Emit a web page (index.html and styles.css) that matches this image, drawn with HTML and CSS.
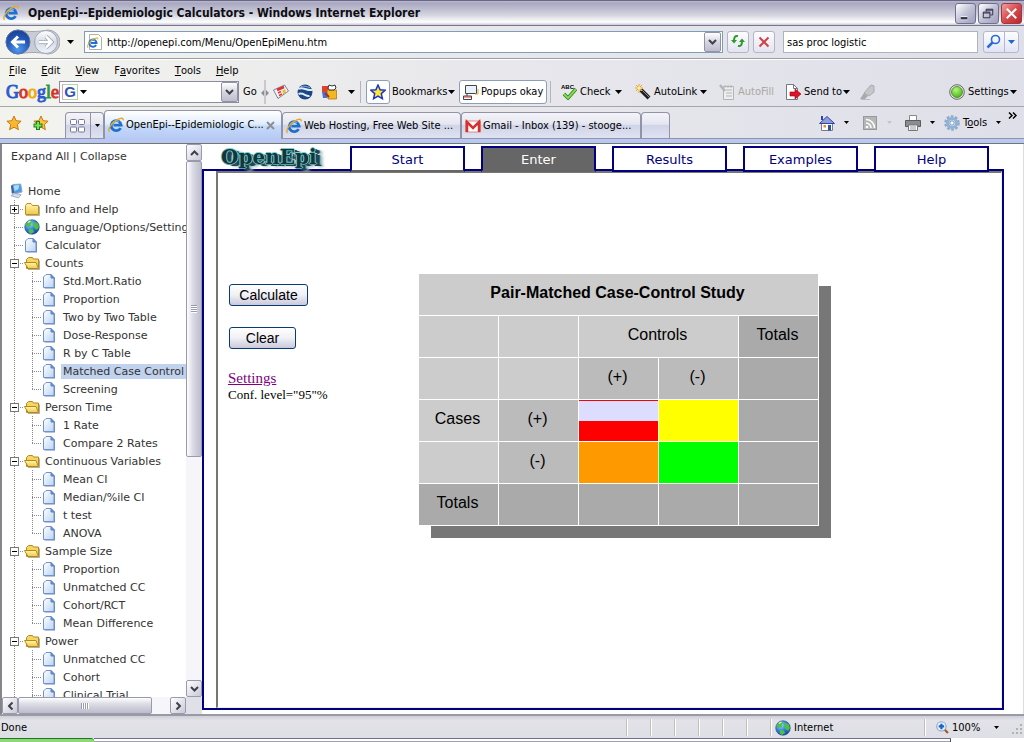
FILE: index.html
```html
<!DOCTYPE html>
<html lang="en">
<head>
<meta charset="utf-8">
<title>OpenEpi--Epidemiologic Calculators</title>
<link rel="stylesheet" href="styles.css">
</head>
<body>
<svg class="defs" aria-hidden="true">
  <defs>
    <linearGradient id="gPage" x1="0" y1="0" x2="1" y2="1"><stop offset="0" stop-color="#fff"/><stop offset="1" stop-color="#b9d4f6"/></linearGradient>
    <linearGradient id="gFolder" x1="0" y1="0" x2="0" y2="1"><stop offset="0" stop-color="#fff6b8"/><stop offset="1" stop-color="#f0c840"/></linearGradient>
    <radialGradient id="gBack" cx=".5" cy=".8" r=".8"><stop offset="0" stop-color="#4f9af0"/><stop offset=".6" stop-color="#2358b8"/><stop offset="1" stop-color="#1a3f90"/></radialGradient>
    <linearGradient id="gFwd" x1="0" y1="0" x2="0" y2="1"><stop offset="0" stop-color="#fff"/><stop offset=".5" stop-color="#d5dbe6"/><stop offset="1" stop-color="#f0f4fb"/></linearGradient>
    <radialGradient id="gGlobe" cx=".35" cy=".3" r=".8"><stop offset="0" stop-color="#9fdcff"/><stop offset=".5" stop-color="#2f7fd6"/><stop offset="1" stop-color="#123f94"/></radialGradient>
    <radialGradient id="gGreen" cx=".4" cy=".3" r=".8"><stop offset="0" stop-color="#b6f57c"/><stop offset="1" stop-color="#3fae10"/></radialGradient>
  </defs>
  <symbol id="ie" viewBox="0 0 16 16">
    <path d="M12.6 11.1A5 5 0 1 1 13.2 8.2H5.4" fill="none" stroke="#1f6fd0" stroke-width="2.8"/>
    <path d="M4.6 6.5A4.4 4.4 0 0 1 11 4.6" fill="none" stroke="#6cc0f8" stroke-width="1.2"/>
    <path d="M1.6 14.8C-.6 13 2.6 7 8 3.4 12 .8 15.6.2 15.2 3.4" fill="none" stroke="#e9a820" stroke-width="1.4"/>
  </symbol>
  <symbol id="page" viewBox="0 0 14 15">
    <path d="M2.500 4H13v10.500H2.500z" fill="#7785b0"/>
    <path d="M4 .5h5l3 3.500v9.500H1.500V3z" fill="url(#gPage)" stroke="#6f93d0"/>
    <path d="M9 .5V4h3.500z" fill="#6f97dc" stroke="#5c7fc0"/>
  </symbol>
  <symbol id="folder" viewBox="0 0 16 14">
    <path d="M1.500 3.500 3 1.500h4l1.500 2h6v9h-13z" fill="url(#gFolder)" stroke="#c09018"/>
    <path d="M2 13.500h13.500v-9" fill="none" stroke="#8c8c8c" stroke-width=".7"/>
  </symbol>
  <symbol id="open" viewBox="0 0 16 14">
    <path d="M2.500 12.500v-9L4.500 1.500h4l1 1.500h5v9.500z" fill="#f3d568" stroke="#b88a14"/>
    <path d="M.5 6.500H12l2.500 6H4z" fill="url(#gFolder)" stroke="#b88a14"/>
    <path d="M4 13.500h11.500v-9" fill="none" stroke="#8c8c8c" stroke-width=".7"/>
  </symbol>
  <symbol id="globe" viewBox="0 0 16 16">
    <circle cx="8" cy="8" r="7.300" fill="url(#gGlobe)" stroke="#27508c" stroke-width=".6"/>
    <path d="M3 3.500C5 1.500 8 1 8.500 2.500L6.500 5 7 7 4 8 1.500 6.500zM10 3l3.500 1 1.500 4-2 3-2.500-2L9 6.500zM5 10l4 .5 1 2.500-3 2-2.500-2z" fill="#4fbf45"/>
    <path d="M4 3.500 6.500 2" stroke="#dfffcf" stroke-width="1.200"/>
  </symbol>
  <symbol id="pc" viewBox="0 0 14 16">
    <path d="M3 1 11.500.5 13 9 5 11z" fill="#4a9ce8" stroke="#8ba3c2"/>
    <path d="M4 2l6-.4L9 6 5 8z" fill="#a7dcff"/>
    <path d="m1 13 4-2.500 7 1.500-3 3.500z" fill="#d6dceb" stroke="#8791aa" stroke-width=".7"/>
    <path d="M1 2 3 1.500 4.800 10 2 11z" fill="#3a63a8"/>
  </symbol>
  <symbol id="star" viewBox="0 0 16 16"><path d="m8 1 2.100 4.700 5 .5-3.800 3.400 1.100 5.100L8 12.200l-4.400 2.500 1.100-5.100L.9 6.200l5-.5z"/></symbol>
  <symbol id="down" viewBox="0 0 7 4"><path d="M0 0h7L3.500 4z"/></symbol>
  <symbol id="chev" viewBox="0 0 9 6"><path d="m1 1 3.500 3.500L8 1" fill="none" stroke="#404048" stroke-width="2"/></symbol>
</svg>

<header class="titlebar">
  <svg class="i16"><use href="#ie"/></svg>
  <h1>OpenEpi--Epidemiologic Calculators - Windows Internet Explorer</h1>
  <button class="win" aria-label="Minimize"><svg viewBox="0 0 20 20"><path d="M5 15h7" stroke="#fff" stroke-width="4"/><path d="M5 15h7" stroke="#33334d" stroke-width="2.500"/></svg></button>
  <button class="win" aria-label="Restore"><svg viewBox="0 0 20 20" fill="none" stroke="#2c2c44"><path d="M7.500 8V5.500h7v6H12"/><path d="M7.500 6.500h7"/><path d="M4.500 8.500h7v6h-7zM4.500 9.500h7"/></svg></button>
  <button class="win close" aria-label="Close"><svg viewBox="0 0 20 20"><path d="m5 5 10 10M15 5 5 15" stroke="#fff" stroke-width="2.200"/></svg></button>
</header>

<div class="address">
  <div class="nav">
    <svg class="backfwd" viewBox="0 0 56 28">
      <path d="M14 2C24 4 34 4 44 2a12 12 0 0 1 0 24C34 24 24 24 14 26a12 12 0 0 1 0-24z" fill="#c9ccd4" stroke="#a4a7b0"/>
      <circle cx="14" cy="14" r="12" fill="url(#gBack)" stroke="#5a74a8"/>
      <circle cx="42" cy="14" r="11.500" fill="url(#gFwd)" stroke="#9ea5b4"/>
      <path d="M21 14H9M14 8.500 8.500 14l5.500 5.500" fill="none" stroke="#fff" stroke-width="3"/>
      <path d="M35 14h12M42 8.500l5.500 5.500-5.500 5.500" fill="none" stroke="#98a0ae" stroke-width="4"/>
      <path d="M35 14h12M42 8.500l5.500 5.500-5.500 5.500" fill="none" stroke="#fff" stroke-width="2.500"/>
    </svg>
    <button class="arrow" aria-label="Recent pages"><svg><use href="#down"/></svg></button>
  </div>
  <div class="field url">
    <svg class="i16" viewBox="0 0 16 16"><path d="M2.500.500h9l3 3v12h-12z" fill="#fff" stroke="#b0b0a8"/><g transform="translate(0 3) scale(.72)"><use href="#ie" width="16" height="16"/></g></svg>
    <input aria-label="Address" value="http://openepi.com/Menu/OpenEpiMenu.htm">
    <button class="drop" aria-label="Show addresses"><svg><use href="#chev"/></svg></button>
  </div>
  <button class="sq" aria-label="Refresh"><svg viewBox="0 0 20 20" fill="none" stroke="#2f9a2a" stroke-width="2"><path d="M10 4C7 3.500 6 5 6 9"/><path d="M10 14c3 .5 4-1 4-5"/><path d="m3 8 3 3.500L9 8zM11 10l3-3.500L17 10z" fill="#2f9a2a" stroke="none"/></svg></button>
  <button class="sq" aria-label="Stop"><svg viewBox="0 0 20 20"><path d="m5.500 5.500 9 9M14.500 5.500l-9 9" stroke="#cf4348" stroke-width="2"/></svg></button>
  <div class="field find"><input aria-label="Search" value="sas proc logistic"></div>
  <div class="split">
    <button aria-label="Search the web"><svg class="i16" viewBox="0 0 16 16" fill="none" stroke="#2a6ad8"><circle cx="9.500" cy="5.500" r="4" stroke-width="1.600"/><path d="m6.500 8.500-5 5" stroke-width="2.500"/></svg></button>
    <button class="arrow blue" aria-label="Search options"><svg><use href="#down"/></svg></button>
  </div>
</div>

<nav class="menu" aria-label="Menu">
  <button><u>F</u>ile</button><button><u>E</u>dit</button><button><u>V</u>iew</button><button>F<u>a</u>vorites</button><button><u>T</u>ools</button><button><u>H</u>elp</button>
</nav>

<div class="gbar">
  <span class="google"><b class="cb">G</b><b class="cr">o</b><b class="cy">o</b><b class="cb">g</b><b class="cg">l</b><b class="cr">e</b></span>
  <div class="field gfind">
    <span class="gbox">G</span><svg class="dn"><use href="#down"/></svg>
    <input aria-label="Google search">
    <button class="drop" aria-label="Search history"><svg><use href="#chev"/></svg></button>
  </div>
  <button>Go</button>
  <svg class="grip" viewBox="0 0 8 24"><path d="M4 0v24" stroke="#a5a5b0"/><path d="m0 13 3-3v6zM8 13l-3-3v6z" fill="#8c8c94"/></svg>
  <button aria-label="News"><svg class="i16" viewBox="0 0 16 16"><path d="m.5 6 11-5 4 6L5 14.500z" fill="#f4f4f8" stroke="#7c8296"/><path d="m4 6 7-3" stroke="#e03030" stroke-width="2.500"/><path d="m5 9 3-1.500M6 11.500 9 10" stroke="#e03838" stroke-width="1.500"/><path d="m9.500 7.500 3-1.500M10 9.500 13 8" stroke="#e6b020" stroke-width="1.500"/></svg></button>
  <button aria-label="Earth"><svg class="i16" viewBox="0 0 16 16"><circle cx="8" cy="8" r="7.500" fill="#1d4683"/><path d="M1 5c5-3 8 2 14 1M1.500 10c5-2 7 3 11 2" fill="none" stroke="#dcecff" stroke-width="2"/><path d="M4 2.500c4-1 6 .5 9 1" fill="none" stroke="#7fb0e8"/></svg></button>
  <button aria-label="Games"><svg class="i16" viewBox="0 0 16 16"><path d="M1 2h6v6H1z" fill="#e0402c"/><path d="M6 6h9.500v9H7z" fill="#f2b81f" stroke="#a76f0c" stroke-width=".7"/><path d="M1 8h5v6H2z" fill="#3f75d6"/><path d="m8 1 3 1 3-1 1 3-2 2H8L7 4z" fill="#fff" stroke="#333"/><path d="m4 9 4 4" stroke="#b12a1a" stroke-width="2"/></svg></button>
  <button class="arrow" aria-label="More"><svg><use href="#down"/></svg></button>
  <span class="vbar"></span>
  <button class="boxed" aria-label="Bookmark page"><svg class="i16" fill="#ffe82a" stroke="#1c32d8" stroke-width="1.500"><use href="#star"/></svg></button>
  <button class="lab book">Bookmarks<svg class="dn"><use href="#down"/></svg></button>
  <button class="boxed"><svg class="i16" viewBox="0 0 16 16"><path d="M2.500 1.500h11v8h-11z" fill="#e8f3ff" stroke="#444"/><path d="M15 5v5h-3" fill="none" stroke="#d9a83a"/><path d="M4 10v2M.5 12h8v3.500h-8z" fill="#fff" stroke="#444"/><path d="M1 13h7" stroke="#d23030"/></svg>Popups okay</button>
  <span class="vbar near"></span>
  <button class="spread"><svg class="i16" viewBox="0 0 16 16"><text x="0" y="5" class="abc">ABC</text><path d="m3 10 4 4 8-9" fill="none" stroke="#38761d" stroke-width="3.500"/><path d="m3 10 4 4 8-9" fill="none" stroke="#7fdc50" stroke-width="2"/></svg>Check<svg class="dn end"><use href="#down"/></svg></button>
  <button class="spread"><svg class="i16" viewBox="0 0 16 16"><path d="m6 6 8 8" stroke="#222" stroke-width="4"/><path d="m7 6 7 7" stroke="#8a8a8a"/><path d="M4 0v9M0 4h8M1 1l6 6M7 1 1 7" stroke="#e8a81c"/><circle cx="4" cy="4" r="1.500" fill="#fff5a0"/></svg>AutoLink<svg class="dn end"><use href="#down"/></svg></button>
  <button class="off" disabled><svg class="i16" viewBox="0 0 16 16" fill="none" stroke="#b4b4b8"><path d="M4.500 2.500h10v13h-10z" fill="#eee"/><path d="M7 6h6M7 9h6M7 12h6M6 1v3M9 1v3M12 1v3"/><path d="m1 1 5 6" stroke-width="2.500"/></svg>AutoFill</button>
  <button class="lab"><svg class="i16" viewBox="0 0 16 16"><path d="M1.500.500h7l4 4v11h-11z" fill="#fff" stroke="#77778a"/><path d="M8.500.500v4h4" fill="none" stroke="#77778a"/><path d="M5 8h5V5l6 5-6 5v-3H5z" fill="#e0132c" stroke="#900" stroke-width=".6"/></svg><span>Send to</span><svg class="dn"><use href="#down"/></svg></button>
  <button aria-label="Highlight"><svg class="i16" viewBox="0 0 16 16"><path d="m5 9 7-8 3 1v6l-5 4z" fill="#c6c6ca" stroke="#a9a9ae"/><path d="m5 9 4 3-3 3H1z" fill="#a9a9ae"/><path d="M2 15.500h9" stroke="#bbb"/></svg></button>
  <button class="lab"><svg class="i16" viewBox="0 0 16 16"><circle cx="8" cy="8" r="7.300" fill="#e9e9e9" stroke="#666"/><circle cx="8" cy="8" r="5.500" fill="url(#gGreen)" stroke="#3c8a1c" stroke-width=".8"/></svg><span>Settings</span><svg class="dn"><use href="#down"/></svg></button>
</div>

<div class="tabrow">
  <button aria-label="Favorites Center"><svg class="i16" fill="#fcb731" stroke="#c77a10"><use href="#star"/></svg></button>
  <button aria-label="Add to Favorites"><svg class="i16" viewBox="0 0 16 16"><g fill="#fcc540" stroke="#c77a10"><use href="#star" width="16" height="16"/></g><path d="M5 6v9M.5 10.500h9" stroke="#1e7e1e" stroke-width="4"/><path d="M5 7v7M1.500 10.500h7" stroke="#7be05a" stroke-width="2"/></svg></button>
  <div class="quick">
    <button aria-label="Quick Tabs"><svg class="i16" viewBox="0 0 16 14" fill="#fff" stroke="#77779a"><rect x=".5" y=".5" width="6" height="5" rx="1"/><rect x="8.500" y=".5" width="6" height="5" rx="1"/><rect x=".5" y="8" width="6" height="5" rx="1"/><rect x="8.500" y="8" width="6" height="5" rx="1"/></svg></button>
    <button class="arrow small" aria-label="Tab list"><svg><use href="#down"/></svg></button>
  </div>
  <button class="tab on"><svg class="i16"><use href="#ie"/></svg><span>OpenEpi--Epidemiologic C...</span><svg class="x" viewBox="0 0 9 9"><path d="m1 1 7 7M8 1 1 8" stroke="#8e8e96" stroke-width="2"/></svg></button>
  <button class="tab"><svg class="i16"><use href="#ie"/></svg><span>Web Hosting, Free Web Site ...</span></button>
  <button class="tab"><svg class="i16" viewBox="0 0 16 16"><path d="M.5 3h15v11H.5z" fill="#fff" stroke="#d88"/><path d="M2 14V4l6 6 6-6v10" fill="none" stroke="#d8302f" stroke-width="2.500"/></svg><span>Gmail - Inbox (139) - stooge...</span></button>
  <button class="tab" aria-label="New Tab"></button>
  <span></span>
  <button class="cmd" aria-label="Home"><svg class="i16" viewBox="0 0 16 16"><path d="M2.500 8h11v7.500h-11z" fill="#fff" stroke="#7c7c90"/><path d="M.5 8.500 8 1.500l7.500 7z" fill="#8d9ddf" stroke="#3344a4"/><path d="M3 1v4" stroke="#3344a4" stroke-width="2"/><path d="M9 10h3v5.500H9z" fill="#2a50a8"/><path d="M4.500 10h2.500v2.500H4.500z" fill="#e08d3c"/></svg><svg class="dn"><use href="#down"/></svg></button>
  <button class="cmd off" aria-label="Feeds"><svg class="i16" viewBox="0 0 16 16"><rect x="1.500" y="1.500" width="13" height="13" fill="#b6b6b6" stroke="#999"/><path d="M4 8a5 5 0 0 1 5 5M4 4.500A8.500 8.500 0 0 1 12.500 13" fill="none" stroke="#fff" stroke-width="1.600"/><circle cx="5" cy="12" r="1.300" fill="#fff"/></svg><svg class="dn"><use href="#down"/></svg></button>
  <button class="cmd" aria-label="Print"><svg class="i16" viewBox="0 0 16 16"><path d="M4.500.500h7v6h-7z" fill="#fff" stroke="#888"/><path d="M.5 5.500h15v6H.5z" fill="#8b8b92" stroke="#5b5b62"/><path d="M3.500 10h9v5.500h-9z" fill="#fff" stroke="#777"/><path d="M5 12h6M5 14h6" stroke="#999"/></svg><svg class="dn"><use href="#down"/></svg></button>
  <button class="cmd"><svg class="i16" viewBox="0 0 16 16"><circle cx="8" cy="8" r="6.500" fill="none" stroke="#8ea9c6" stroke-width="2.500" stroke-dasharray="2.600 1.500"/><circle cx="8" cy="8" r="4.500" fill="#fff" stroke="#8fb2d6" stroke-width="3"/><circle cx="8" cy="8" r="2.200" fill="#fff" stroke="#6f8fb0"/></svg><span>T<u>o</u>ols</span><svg class="dn"><use href="#down"/></svg></button>
  <button class="more" aria-label="More commands"><svg viewBox="0 0 9 7" fill="none" stroke="#000" stroke-width="1.500"><path d="m1 .5 3 3-3 3M5 .5l3 3-3 3"/></svg></button>
</div>
<div class="strip"></div>

<div class="content">
  <aside class="side">
    <div class="tree">
      <p><a href="#">Expand All</a> | <a href="#">Collapse</a></p>
      <ul>
        <li><svg class="pc"><use href="#pc"/></svg><a href="#">Home</a></li>
        <li><i class="br"><button class="tg plus" aria-label="Expand"></button></i><svg class="fo"><use href="#folder"/></svg><a href="#">Info and Help</a></li>
        <li><i class="br"></i><svg class="gl"><use href="#globe"/></svg><a href="#">Language/Options/Settings</a></li>
        <li><i class="br"></i><svg class="pg"><use href="#page"/></svg><a href="#">Calculator</a></li>
        <li><i class="br"><button class="tg" aria-label="Collapse"></button></i><svg class="fo"><use href="#open"/></svg><a href="#">Counts</a></li>
        <li><i class="v"></i><i class="br"></i><svg class="pg"><use href="#page"/></svg><a href="#">Std.Mort.Ratio</a></li>
        <li><i class="v"></i><i class="br"></i><svg class="pg"><use href="#page"/></svg><a href="#">Proportion</a></li>
        <li><i class="v"></i><i class="br"></i><svg class="pg"><use href="#page"/></svg><a href="#">Two by Two Table</a></li>
        <li><i class="v"></i><i class="br"></i><svg class="pg"><use href="#page"/></svg><a href="#">Dose-Response</a></li>
        <li><i class="v"></i><i class="br"></i><svg class="pg"><use href="#page"/></svg><a href="#">R by C Table</a></li>
        <li><i class="v"></i><i class="br"></i><svg class="pg"><use href="#page"/></svg><a href="#" class="sel">Matched Case Control</a></li>
        <li><i class="v"></i><i class="br last"></i><svg class="pg"><use href="#page"/></svg><a href="#">Screening</a></li>
        <li><i class="br"><button class="tg" aria-label="Collapse"></button></i><svg class="fo"><use href="#open"/></svg><a href="#">Person Time</a></li>
        <li><i class="v"></i><i class="br"></i><svg class="pg"><use href="#page"/></svg><a href="#">1 Rate</a></li>
        <li><i class="v"></i><i class="br last"></i><svg class="pg"><use href="#page"/></svg><a href="#">Compare 2 Rates</a></li>
        <li><i class="br"><button class="tg" aria-label="Collapse"></button></i><svg class="fo"><use href="#open"/></svg><a href="#">Continuous Variables</a></li>
        <li><i class="v"></i><i class="br"></i><svg class="pg"><use href="#page"/></svg><a href="#">Mean CI</a></li>
        <li><i class="v"></i><i class="br"></i><svg class="pg"><use href="#page"/></svg><a href="#">Median/%ile CI</a></li>
        <li><i class="v"></i><i class="br"></i><svg class="pg"><use href="#page"/></svg><a href="#">t test</a></li>
        <li><i class="v"></i><i class="br last"></i><svg class="pg"><use href="#page"/></svg><a href="#">ANOVA</a></li>
        <li><i class="br"><button class="tg" aria-label="Collapse"></button></i><svg class="fo"><use href="#open"/></svg><a href="#">Sample Size</a></li>
        <li><i class="v"></i><i class="br"></i><svg class="pg"><use href="#page"/></svg><a href="#">Proportion</a></li>
        <li><i class="v"></i><i class="br"></i><svg class="pg"><use href="#page"/></svg><a href="#">Unmatched CC</a></li>
        <li><i class="v"></i><i class="br"></i><svg class="pg"><use href="#page"/></svg><a href="#">Cohort/RCT</a></li>
        <li><i class="v"></i><i class="br last"></i><svg class="pg"><use href="#page"/></svg><a href="#">Mean Difference</a></li>
        <li><i class="br"><button class="tg" aria-label="Collapse"></button></i><svg class="fo"><use href="#open"/></svg><a href="#">Power</a></li>
        <li><i class="v"></i><i class="br"></i><svg class="pg"><use href="#page"/></svg><a href="#">Unmatched CC</a></li>
        <li><i class="v"></i><i class="br"></i><svg class="pg"><use href="#page"/></svg><a href="#">Cohort</a></li>
        <li><i class="v"></i><i class="br"></i><svg class="pg"><use href="#page"/></svg><a href="#">Clinical Trial</a></li>
      </ul>
    </div>
    <div class="vscroll">
      <button class="sb up" aria-label="Scroll up"><svg><use href="#chev"/></svg></button>
      <div class="track"><div class="thumb"><span></span></div></div>
      <button class="sb" aria-label="Scroll down"><svg><use href="#chev"/></svg></button>
    </div>
    <div class="hscroll">
      <button class="sb left" aria-label="Scroll left"><svg><use href="#chev"/></svg></button>
      <div class="track"><div class="thumb"><span></span></div></div>
      <button class="sb right" aria-label="Scroll right"><svg><use href="#chev"/></svg></button>
    </div>
    <div class="corner"></div>
  </aside>

  <main class="main">
    <nav class="tabs" aria-label="Sections">
      <span class="logo">OpenEpi</span>
      <a href="#" class="visited">Start</a><a href="#" class="current">Enter</a><a href="#">Results</a><a href="#">Examples</a><a href="#">Help</a>
    </nav>
    <div class="frame">
      <div class="pane">
        <div class="actions">
          <button class="xp wide">Calculate</button>
          <button class="xp">Clear</button>
          <a href="#">Settings</a>
          <p>Conf. level="95"%</p>
        </div>
        <table>
          <tr><th colspan="5">Pair-Matched Case-Control Study</th></tr>
          <tr><td></td><td></td><td colspan="2">Controls</td><td class="t">Totals</td></tr>
          <tr><td></td><td></td><td class="m">(+)</td><td class="m">(-)</td><td class="t"></td></tr>
          <tr><td>Cases</td><td class="m">(+)</td><td class="in red"><input class="focus" aria-label="Cases (+), Controls (+)"></td><td class="in yellow"><input aria-label="Cases (+), Controls (-)"></td><td class="t"></td></tr>
          <tr><td></td><td class="m">(-)</td><td class="in orange"><input aria-label="Cases (-), Controls (+)"></td><td class="in green"><input aria-label="Cases (-), Controls (-)"></td><td class="t"></td></tr>
          <tr><td class="t">Totals</td><td class="t"></td><td class="t"></td><td class="t"></td><td class="t"></td></tr>
        </table>
      </div>
    </div>
  </main>
</div>

<footer class="status">
  <span class="done">Done</span><span></span><span></span><span></span><span></span><span></span><span></span>
  <span class="zone"><svg class="i16"><use href="#globe"/></svg>Internet</span>
  <span class="zoom"><svg class="i12" viewBox="0 0 12 12"><path d="m7 7 4 4" stroke="#a05a20" stroke-width="2"/><circle cx="5" cy="5" r="4.300" fill="#e6f3ff" stroke="#8da4bc"/><path d="M5 2.500v5M2.500 5h5" stroke="#1c5fd0" stroke-width="2"/></svg>100%<svg class="dn end"><use href="#down"/></svg><svg class="size" viewBox="0 0 12 12" fill="#b4b2a6"><path d="M8 0h2v2H8zM8 4h2v2H8zM4 4h2v2H4zM8 8h2v2H8zM4 8h2v2H4zM0 8h2v2H0z"/></svg></span>
</footer>
<div class="taskbar"><span class="start"></span><span class="tasks"></span><span class="tray"></span></div>
</body>
</html>
```
FILE: styles.css
```css
* { box-sizing: border-box; }
html, body { height: 100%; margin: 0; }
body {
  display: flex;
  flex-direction: column;
  overflow: hidden;
  background: linear-gradient(90deg, #f3f3ee, #e7e7ec 50%, #dfdfe9);
  color: #000;
  font: 11px/14px "DejaVu Sans Condensed", "DejaVu Sans", sans-serif;
}
button, input { font: inherit; color: inherit; margin: 0; padding: 0; border: 0; background: none; outline: 0; }
button { display: flex; align-items: center; white-space: nowrap; }
svg { display: block; flex: none; }
.defs { position: absolute; width: 0; height: 0; }
.i16 { width: 16px; height: 16px; }
.i12 { width: 13px; height: 13px; }
.dn, .arrow svg { width: 7px; height: 4px; fill: #000; }
.arrow { justify-content: center; width: 20px; }
.end { margin-left: auto; }

.titlebar {
  display: flex;
  align-items: center;
  flex: none;
  gap: 2px;
  height: 26px;
  padding: 0 2px 0 3px;
  border-top: 1px solid #6a6780;
  border-bottom: 1px solid #77778f;
  background: linear-gradient(#b9b8d0, #a9a8c2 10%, #d6d6e0 60%, #fff 88%, #c9c9d6);
}
.titlebar h1 { flex: 1; margin: 0; padding-left: 7px; font: bold 12px/16px "DejaVu Sans Condensed", sans-serif; color: #0d0d14; white-space: nowrap; }
.win { width: 21px; height: 21px; border: 1px solid #6f7090; border-radius: 3px; background: linear-gradient(135deg, #fff, #c2c2d6 50%, #9fa0bb); }
.win svg { width: 19px; height: 19px; }
.close { border-color: #a03840; background: linear-gradient(135deg, #f0a0a0, #d8494c 50%, #b8282c); }

.address { display: flex; align-items: center; flex: none; height: 34px; padding: 0 5px 2px 4px; border-bottom: 1px solid #fff; box-shadow: inset 0 -1px #9c9ca4; }
.nav { display: flex; width: 80px; }
.backfwd { width: 56px; height: 28px; }
.field { display: flex; align-items: center; background: #fff; border: 1px solid #7f9db9; height: 22px; }
.field input { flex: 1; min-width: 0; height: 18px; padding-top: 1px; }
.url { flex: 1; gap: 4px; padding: 0 1px 0 2px; margin-right: 4px; }
.drop { justify-content: center; width: 17px; height: 20px; border: 1px solid #9393a8; border-radius: 2px; background: linear-gradient(#fff, #d6d6e2 50%, #bdbdce); }
.drop svg, .sb svg { width: 9px; height: 6px; }
.sq { width: 22px; height: 22px; border: 1px solid #b4b4c6; border-radius: 3px; background: linear-gradient(#fdfdff, #e2e4f0); margin-right: 4px; }
.sq svg { width: 20px; height: 20px; }
.find { width: 195px; border-color: #aeb4bf; margin: 0 5px 0 4px; padding-left: 3px; }
.split { display: flex; height: 22px; border: 1px solid #b4b8cc; border-radius: 3px; background: linear-gradient(#fdfdff, #e2e4f4); }
.split button { justify-content: center; width: 20px; }
.split .arrow { width: 14px; border-left: 1px solid #b4b8cc; }
.blue svg { fill: #1d66d8; }

.menu { display: flex; flex: none; gap: 15px; height: 20px; padding: 2px 9px 0; }

.gbar {
  display: grid;
  grid-template-columns: 53px 184px 19px 11px 24px 24px 20px 15px 10px 26px 67px 91px 10px 74px 85px 64px 76px 1fr 70px;
  align-items: center;
  flex: none;
  height: 27px;
  padding: 0 7px 3px 6px;
  border-bottom: 1px solid #a5a5ac;
}
.google { font: 18px/22px "Liberation Serif", serif; white-space: nowrap; }
.google b { font-weight: normal; }
.cb { color: #2a5bd0; } .cr { color: #d8342c; } .cy { color: #e8b010; } .cg { color: #2f9a3a; }
.google b { -webkit-text-stroke: 1px; }
.gfind { width: 180px; padding: 0 0 0 2px; border-color: #8c8ca0; gap: 1px; }
.gbox { width: 16px; height: 16px; border: 1px solid #b5d2a5; border-left-color: #e5a0a0; font: bold 15px/14px "Liberation Sans", sans-serif; color: #2f55b8; text-align: center; }
.gfind .dn { margin-left: 1px; }
.grip { width: 8px; height: 24px; margin-left: -1px; }
.vbar { width: 1px; height: 22px; margin-left: 4px; background: #b4b4c0; }
.near { margin-left: 0; }
.boxed { gap: 2px; height: 24px; padding: 0 3px; border: 1px solid #8ba0b8; border-radius: 3px; background: #fff; width: max-content; }
.lab { gap: 1px; padding-left: 2px; }
.lab span { padding-left: 2px; }
.book { padding-left: 0; }
.spread { gap: 3px; padding: 0 12px 0 1px; }
.abc { font: bold 6px "Liberation Sans", sans-serif; }
.off { gap: 3px; color: #aaa9a0; }
.off .dn { fill: #c4c4c4; }

.tabrow {
  display: grid;
  grid-template-columns: 27px 32px 39px 178px 179px 180px 29px 1fr 43px 43px 39px 64px 12px;
  align-items: center;
  flex: none;
  height: 32px;
  padding: 0 4px 0 6px;
  border-bottom: 1px solid #9393a4;
}
.quick, .tab { align-self: end; height: 26px; border: 1px solid #9393a8; border-bottom: 0; border-radius: 4px 4px 0 0; background: linear-gradient(#f4f4f8, #e4e6f0 45%, #d0d4e8 50%, #dfe2f0); }
.quick { display: flex; }
.quick button { width: 25px; justify-content: center; }
.quick .small { width: 13px; border-left: 1px solid #9393a8; }
.small svg { width: 5px; height: 3px; }
.tab { min-width: 0; padding: 0 3px; gap: 2px; }
.tab span { flex: 1; text-align: left; }
.tab.on { height: 29px; margin-bottom: -1px; background: linear-gradient(#fff, #e3eefc 45%, #c4daf8 55%, #b7c9f4); }
.x { width: 9px; height: 9px; margin-right: 3px; }
.cmd { gap: 3px; padding: 0; }
.cmd .dn { width: 5px; height: 3px; margin-left: 6px; }
.more { align-self: start; margin-top: 5px; }
.more svg { width: 9px; height: 7px; }
.strip { flex: none; height: 5px; background: #b6c8f3; border-bottom: 1px solid #77776f; }

.content { display: flex; flex: 1; min-height: 0; background: #fff; }
.side { display: grid; grid-template: minmax(0, 1fr) 17px / 184px 16px; width: 202px; flex: none; border-left: 2px solid #85858a; }
.tree { overflow: hidden; padding: 4px 0 0 8px; font: 11px/18px "DejaVu Sans", Verdana, sans-serif; }
.tree a, .tree p { color: #333; text-decoration: none; white-space: nowrap; }
.tree p { margin: 0 0 16px 1px; }
.tree ul { list-style: none; margin: 0; padding: 0; }
.tree li { display: flex; align-items: center; height: 18px; }
.tree li a { padding: 0 2px; line-height: 15px; margin-left: 3px; }
.tree .sel { background: #c1d2ee; }
.tree i { flex: none; height: 18px; background: repeating-linear-gradient(#888 0 1px, transparent 1px 2px) 4px 0 / 1px 100% no-repeat; }
.tree .v { width: 18px; }
.tree .br {
  display: flex;
  align-items: center;
  width: 14px;
  background:
    repeating-linear-gradient(#888 0 1px, transparent 1px 2px) 4px 0 / 1px 100% no-repeat,
    repeating-linear-gradient(90deg, #888 0 1px, transparent 1px 2px) 4px 9px / 10px 1px no-repeat;
}
.tree .last { background-size: 1px 10px, 10px 1px; }
.tg { width: 9px; height: 9px; border: 1px solid #777; background: linear-gradient(#000, #000) center / 5px 1px no-repeat #fff; }
.plus { background: linear-gradient(#000, #000) center / 5px 1px no-repeat, linear-gradient(#000, #000) center / 1px 5px no-repeat #fff; }
.pc { width: 13px; height: 16px; }
.fo { width: 16px; height: 14px; }
.gl { width: 16px; height: 16px; }
.pg { width: 14px; height: 15px; margin-right: 2px; }
.vscroll { display: flex; flex-direction: column; }
.hscroll { display: flex; }
.sb { justify-content: center; flex: none; width: 16px; height: 17px; border: 1px solid #9a9aae; border-radius: 2px; background: linear-gradient(135deg, #fff, #c9c9d8); }
.up svg { transform: rotate(180deg); }
.left svg { transform: rotate(90deg); }
.right svg { transform: rotate(-90deg); }
.track { flex: 1; background: #f5f5fa; }
.thumb { display: flex; align-items: center; justify-content: center; border: 1px solid #9a9aae; border-radius: 2px; }
.vscroll .thumb { height: 57%; background: linear-gradient(90deg, #fff, #dcdce6 40%, #bcbccc); }
.hscroll .thumb { width: 88%; height: 17px; background: linear-gradient(#fff, #dcdce6 40%, #bcbccc); }
.vscroll .thumb span { width: 6px; height: 8px; background: repeating-linear-gradient(#9a9aae 0 1px, #fff 1px 2px); }
.hscroll .thumb span { width: 8px; height: 6px; background: repeating-linear-gradient(90deg, #9a9aae 0 1px, #fff 1px 2px); }
.corner { background: #e0e0e8; }

.main { display: flex; flex-direction: column; flex: 1; min-width: 0; padding: 2px 19px 4px 0; border-right: 1px solid #dcdce4; }
.tabs { display: flex; align-items: flex-end; gap: 16px; flex: none; margin-bottom: -3px; z-index: 1; padding-left: 17px; font: 13px/23px "DejaVu Sans", Verdana, sans-serif; }
.tabs a { width: 115px; height: 26px; border: 2px solid #000080; background: #fff; color: #000080; text-align: center; text-decoration: none; }
.tabs .visited { border-bottom-color: #666; }
.tabs .current { border-bottom-color: #666; background: #666; color: #fff; }
.logo { width: 115px; height: 26px; padding-left: 2px; font: bold 20px/22px "DejaVu Serif", serif; color: #16343c; text-shadow: 1px 0 #6fd0cc, -1px 0 #6fd0cc, 0 1px #4fa8a8, 0 -1px #6fd0cc, 3px 1px #26424c, 5px 2px #26424c, 6px 2px 1px #4fa8a8, 8px 3px 3px #a8b4b8; }
.frame { display: flex; flex: 1; min-height: 0; padding-left: 12px; border: 2px solid #000080; }
.pane { display: flex; align-items: flex-start; flex: 1; border-top: 2px solid #77776f; border-left: 2px solid #77776f; border-right: 1px solid #efeddc; border-bottom: 1px solid #efeddc; padding: 101px 10px 0; }
.actions { display: flex; flex-direction: column; align-items: flex-start; width: 191px; padding-top: 9px; font: 13px/16px "Liberation Serif", serif; }
.actions a { font-size: 15px; line-height: 18px; color: #800080; }
.actions p { margin: 0; }
.xp { justify-content: center; width: 67px; height: 22px; margin: 1px 0 20px 1px; border: 1px solid #0a3c74; border-radius: 3px; background: linear-gradient(#fff, #f0f0f6 50%, #c9c9dc); font: 14px/18px "Liberation Sans", Arial, sans-serif; }
.wide { width: 79px; }
table { width: 400px; table-layout: fixed; border-spacing: 0; background: #fff; box-shadow: 12px 12px #777; font: 16px/18px "Liberation Sans", Arial, sans-serif; }
th, td { height: 42px; padding: 0 4px 3px 2px; border-right: 1px solid #fff; border-bottom: 1px solid #fff; background: #ccc; background-clip: padding-box; text-align: center; }
.m { background-color: #bbb; }
.t { background-color: #aaa; }
.in { padding: 1px 0 0; vertical-align: top; }
.in input { display: block; width: 100%; height: 20px; text-align: center; }
.red { background-color: #f00; }
.yellow { background-color: #ff0; }
.orange { background-color: #f90; }
.green { background-color: #0f0; }
.in .focus { background: #ddf; }

.status { display: grid; grid-template-columns: 1fr repeat(6, 24px) 154px 100px; align-items: center; flex: none; height: 24px; padding-top: 1px; border-top: 2px solid #9a9aa4; background: linear-gradient(#cfcfd8, #e2e2e8 20%, #dedee6); }
.status > span { display: flex; align-items: center; height: 17px; border-left: 1px solid #c2c0b4; box-shadow: inset 1px 0 #fff; }
.status > .done { border: 0; box-shadow: none; padding-left: 1px; }
.zone { gap: 3px; padding-left: 4px; }
.zoom { gap: 3px; padding-left: 11px; }
.zoom .dn { width: 5px; height: 3px; }
.size { width: 12px; height: 12px; margin-left: 10px; align-self: end; }
.taskbar { display: flex; flex: none; height: 4px; background: #fff; }
.start { width: 94px; border-top: 1px solid #1c7a1c; border-radius: 0 3px 0 0; background: #8fd878; }
.tasks { flex: 1; border-top: 1px solid #6e6e92; border-right: 1px solid #50507a; background: linear-gradient(#fff 2px, #a0a0a8 2px); }
.tray { width: 73px; }
```
